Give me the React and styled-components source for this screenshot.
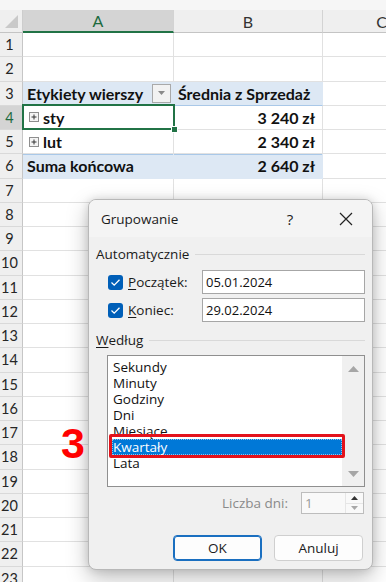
import React from 'react';
import styled, { createGlobalStyle } from 'styled-components';

const Global = createGlobalStyle`
  html, body { margin: 0; padding: 0; background: #fff; }
  body { width: 386px; height: 582px; overflow: hidden; }
  * { box-sizing: border-box; }
`;

const COLS = '23px 151px 149px 118px';

const Screen = styled.div`
  position: relative;
  width: 386px;
  height: 582px;
  overflow: hidden;
  background: #fff;
  font-family: Lato, "Liberation Sans", sans-serif;
`;

const TopStrip = styled.div`
  height: 10px;
  background: #f6f6f6;
`;

const HeaderRow = styled.div`
  display: grid;
  grid-template-columns: ${COLS};
  height: 23px;
  background: #efefef;
`;

const Corner = styled.div`
  display: flex;
  align-items: flex-end;
  justify-content: flex-end;
  padding: 0 4px 4px 0;
  border-right: 1px solid #cdcdcd;
  border-bottom: 1px solid #c4c4c4;
`;

const ColHead = styled.div`
  display: flex;
  align-items: center;
  justify-content: center;
  font-size: 16px;
  color: ${p => (p.$sel ? '#1d6b3e' : '#333')};
  background: ${p => (p.$sel ? '#d4d4d4' : '#efefef')};
  border-right: 1px solid #d3d3d3;
  border-bottom: ${p => (p.$sel ? '2px solid #217346' : '1px solid #c4c4c4')};
  overflow: hidden;
  white-space: nowrap;
`;

const SheetRow = styled.div`
  display: grid;
  grid-template-columns: ${COLS};
  height: 24.25px;
`;

const RowHead = styled.div`
  display: flex;
  align-items: center;
  justify-content: center;
  padding-right: 3px;
  font-size: 14.5px;
  color: ${p => (p.$sel ? '#1d6b3e' : '#262626')};
  background: ${p => (p.$sel ? '#d4d4d4' : '#efefef')};
  border-right: 1px solid #c6c6c6;
  border-bottom: 1px solid #d9d9d9;
`;

const FILL = '#dde8f4';

const Cell = styled.div`
  position: relative;
  display: flex;
  align-items: center;
  justify-content: ${p => (p.$right ? 'flex-end' : 'flex-start')};
  padding: 0 ${p => (p.$right ? '7px' : '2px')} 0 ${p => (p.$indent ? '6px' : '4px')};
  background: ${p => (p.$fill ? FILL : '#fff')};
  border-right: 1px solid ${p => (p.$fill ? FILL : '#e1e1e1')};
  border-bottom: 1px solid ${p => (p.$line === 'bottom' ? '#a9c8e8' : p.$fill ? FILL : '#e1e1e1')};
  box-shadow: ${p => (p.$line === 'top' ? 'inset 0 1px 0 #a9c8e8' : 'none')};
  font-size: 16px;
  font-weight: ${p => (p.$bold ? 700 : 400)};
  color: #111;
  white-space: nowrap;
`;

const Selection = styled.div`
  position: absolute;
  top: -2px;
  left: -1px;
  right: -2px;
  bottom: -1px;
  border: 2px solid #217346;
  pointer-events: none;
  z-index: 2;
`;

const FillHandle = styled.div`
  position: absolute;
  right: -5px;
  bottom: -5px;
  width: 7px;
  height: 7px;
  background: #217346;
  border: 1px solid #fff;
`;

const FilterBtn = styled.div`
  margin-left: auto;
  width: 19px;
  height: 19px;
  display: flex;
  align-items: center;
  justify-content: center;
  background: #f2f2f2;
  border: 1px solid #a9a9a9;
`;

const PlusBox = styled.svg`
  flex: none;
  margin-right: 4px;
`;

/* ---------------- dialog ---------------- */

const Dialog = styled.div`
  position: absolute;
  left: 88px;
  top: 199px;
  width: 285px;
  height: 371px;
  display: flex;
  flex-direction: column;
  background: #f0f0f0;
  border: 1px solid #b8b8b8;
  border-radius: 8px;
  box-shadow: 0 8px 22px rgba(0, 0, 0, 0.26), 0 0 8px rgba(0, 0, 0, 0.12);
  font-family: "Open Sans", "Noto Sans", sans-serif;
  font-size: 13.5px;
  color: #1b1b1b;
  overflow: hidden;
`;

const TitleBar = styled.div`
  height: 37px;
  display: flex;
  align-items: center;
  padding-left: 12px;
  background: #f4f4f4;
`;

const TitleText = styled.div`
  flex: 1;
  font-size: 13.5px;
`;

const TitleBtn = styled.div`
  width: ${p => p.$w}px;
  height: 37px;
  display: flex;
  align-items: center;
  justify-content: center;
  margin-right: ${p => p.$mr || 0}px;
  font-size: 15px;
  color: #222;
`;

const Body = styled.div`
  display: flex;
  flex-direction: column;
  padding: 7px 7px 0 7px;
`;

const GroupHeader = styled.div`
  display: flex;
  align-items: center;
  gap: 6px;
  height: 20px;
  margin-top: ${p => p.$mt || 0}px;
`;

const GroupLine = styled.div`
  flex: 1;
  height: 1px;
  background: #d9d9d9;
`;

const Key = styled.span`
  text-decoration: underline;
  text-underline-offset: 2px;
`;

const FieldRow = styled.div`
  display: grid;
  grid-template-columns: 15px 69px 1fr;
  column-gap: 5px;
  align-items: center;
  height: 24px;
  margin-top: ${p => p.$mt}px;
  padding-left: 12px;
`;

const Check = styled.div`
  width: 15px;
  height: 15px;
  border-radius: 3px;
  background: #005fb8;
  display: flex;
  align-items: center;
  justify-content: center;
`;

const TextInput = styled.div`
  height: 24px;
  display: flex;
  align-items: center;
  padding-left: 3px;
  background: #fff;
  border: 1px solid #a6a6a6;
  font-size: 13px;
  color: #111;
`;

const ListBox = styled.div`
  position: relative;
  display: flex;
  height: 132px;
  margin: 5px 0 0 11px;
  background: #fff;
  border: 1px solid #8f8f8f;
`;

const ListItems = styled.div`
  flex: 1;
  padding: 3px 0 0 4px;
  display: flex;
  flex-direction: column;
`;

const ListItem = styled.div`
  height: 16px;
  line-height: 16px;
  padding-left: 1px;
  font-size: 13.5px;
  color: ${p => (p.$sel ? '#fff' : '#111')};
  background: ${p => (p.$sel ? '#0078d7' : 'transparent')};
  outline: ${p => (p.$sel ? '1px dotted rgba(255,255,255,0.55)' : 'none')};
  outline-offset: -1px;
`;

const ScrollBar = styled.div`
  width: 22px;
  background: #f0f0f0;
  display: flex;
  flex-direction: column;
  justify-content: space-between;
  align-items: center;
  padding: 10px 0 9px;
`;

const Highlight = styled.div`
  position: absolute;
  left: 1px;
  top: 78px;
  width: 236px;
  height: 24px;
  border: 3px solid #e3121b;
  border-radius: 2px;
  pointer-events: none;
`;

const SpinRow = styled.div`
  display: flex;
  justify-content: flex-end;
  align-items: center;
  gap: 13px;
  margin-top: 5px;
  padding-right: 1px;
`;

const SpinLabel = styled.div`
  color: #8a8a8a;
  font-size: 13.5px;
`;

const SpinBox = styled.div`
  width: 63px;
  height: 22px;
  display: flex;
  background: #f9f9f9;
  border: 1px solid #bdbdbd;
`;

const SpinValue = styled.div`
  flex: 1;
  padding-left: 3px;
  display: flex;
  align-items: center;
  color: #9a9a9a;
  font-size: 13.5px;
`;

const SpinButtons = styled.div`
  width: 18px;
  display: flex;
  flex-direction: column;
  border-left: 1px solid #e6e6e6;
`;

const SpinHalf = styled.div`
  flex: 1;
  display: flex;
  align-items: center;
  justify-content: center;
  border-top: ${p => (p.$bottom ? '1px solid #e6e6e6' : 'none')};
`;

const ButtonRow = styled.div`
  display: flex;
  justify-content: flex-end;
  gap: 12px;
  margin-top: 21px;
  padding-right: 2px;
`;

const Button = styled.div`
  width: 89px;
  height: 26px;
  display: flex;
  align-items: center;
  justify-content: center;
  background: #fdfdfd;
  border: 1px solid ${p => (p.$primary ? '#1a6fc0' : '#cfcfcf')};
  box-shadow: ${p => (p.$primary ? 'inset 0 0 0 1px #1a6fc0' : 'none')};
  border-radius: 4px;
  font-size: 13.5px;
  color: #1b1b1b;
`;

const StepNumber = styled.div`
  position: absolute;
  left: 61px;
  top: 422px;
  font-family: "Liberation Sans", Arial, sans-serif;
  font-weight: 700;
  font-size: 43px;
  line-height: 1;
  color: #ff0000;
`;

const Tri = ({ dir = 'down', color, w = 9, h = 5 }) => (
  <svg width={w} height={h} viewBox={`0 0 ${w} ${h}`}>
    {dir === 'down' ? (
      <polygon points={`0,0 ${w},0 ${w / 2},${h}`} fill={color} />
    ) : (
      <polygon points={`0,${h} ${w},${h} ${w / 2},0`} fill={color} />
    )}
  </svg>
);

const Plus = () => (
  <PlusBox width="10" height="10" viewBox="0 0 10 10">
    <rect x="0.5" y="0.5" width="9" height="9" fill="#f4f4f4" stroke="#8e8e8e" />
    <path d="M2.5 5H7.5M5 2.5V7.5" stroke="#333" strokeWidth="1" />
  </PlusBox>
);

const rows = Array.from({ length: 23 }, (_, i) => i + 1);

function renderCells(n) {
  switch (n) {
    case 3:
      return (
        <>
          <Cell $fill $bold $line="bottom">
            Etykiety wierszy
            <FilterBtn>
              <Tri color="#8a8a8a" w={7} h={4} />
            </FilterBtn>
          </Cell>
          <Cell $fill $bold $line="bottom">Średnia z Sprzedaż</Cell>
        </>
      );
    case 4:
      return (
        <>
          <Cell $bold $indent>
            <Plus />sty
            <Selection>
              <FillHandle />
            </Selection>
          </Cell>
          <Cell $bold $right>3 240 zł</Cell>
        </>
      );
    case 5:
      return (
        <>
          <Cell $bold $indent>
            <Plus />lut
          </Cell>
          <Cell $bold $right>2 340 zł</Cell>
        </>
      );
    case 6:
      return (
        <>
          <Cell $fill $bold $line="top">Suma końcowa</Cell>
          <Cell $fill $bold $right $line="top">2 640 zł</Cell>
        </>
      );
    default:
      return (
        <>
          <Cell />
          <Cell />
        </>
      );
  }
}

const items = ['Sekundy', 'Minuty', 'Godziny', 'Dni', 'Miesiące', 'Kwartały', 'Lata'];

export default function App() {
  return (
    <Screen>
      <Global />
      <TopStrip />
      <HeaderRow>
        <Corner>
          <svg width="13" height="13" viewBox="0 0 13 13">
            <polygon points="13,0 13,13 0,13" fill="#c9c9c9" />
          </svg>
        </Corner>
        <ColHead $sel>A</ColHead>
        <ColHead>B</ColHead>
        <ColHead>C</ColHead>
      </HeaderRow>
      {rows.map(n => (
        <SheetRow key={n}>
          <RowHead $sel={n === 4}>{n}</RowHead>
          {renderCells(n)}
          <Cell />
        </SheetRow>
      ))}

      <Dialog>
        <TitleBar>
          <TitleText>Grupowanie</TitleText>
          <TitleBtn $w={40} $mr={13}>?</TitleBtn>
          <TitleBtn $w={46} $mr={3}>
            <svg width="14" height="14" viewBox="0 0 14 14">
              <path d="M1 1L13 13M13 1L1 13" stroke="#222" strokeWidth="1.2" />
            </svg>
          </TitleBtn>
        </TitleBar>
        <Body>
          <GroupHeader>
            Automatycznie
            <GroupLine />
          </GroupHeader>
          <FieldRow $mt={6}>
            <Check>
              <svg width="11" height="9" viewBox="0 0 11 9">
                <path d="M1.5 4.5L4.2 7.2L9.5 1.8" fill="none" stroke="#fff" strokeWidth="1.3" />
              </svg>
            </Check>
            <span>
              <Key>P</Key>oczątek:
            </span>
            <TextInput>05.01.2024</TextInput>
          </FieldRow>
          <FieldRow $mt={4}>
            <Check>
              <svg width="11" height="9" viewBox="0 0 11 9">
                <path d="M1.5 4.5L4.2 7.2L9.5 1.8" fill="none" stroke="#fff" strokeWidth="1.3" />
              </svg>
            </Check>
            <span>
              <Key>K</Key>oniec:
            </span>
            <TextInput>29.02.2024</TextInput>
          </FieldRow>
          <GroupHeader $mt={8}>
            <span>
              <Key>W</Key>edług
            </span>
            <GroupLine />
          </GroupHeader>
          <ListBox>
            <ListItems>
              {items.map(it => (
                <ListItem key={it} $sel={it === 'Kwartały'}>
                  {it}
                </ListItem>
              ))}
            </ListItems>
            <ScrollBar>
              <Tri dir="up" color="#a6a6a6" w={11} h={6} />
              <Tri dir="down" color="#a6a6a6" w={11} h={6} />
            </ScrollBar>
            <Highlight />
          </ListBox>
          <SpinRow>
            <SpinLabel>Liczba dni:</SpinLabel>
            <SpinBox>
              <SpinValue>1</SpinValue>
              <SpinButtons>
                <SpinHalf>
                  <Tri dir="up" color="#333" w={7} h={4} />
                </SpinHalf>
                <SpinHalf $bottom>
                  <Tri dir="down" color="#a8a8a8" w={7} h={4} />
                </SpinHalf>
              </SpinButtons>
            </SpinBox>
          </SpinRow>
          <ButtonRow>
            <Button $primary>OK</Button>
            <Button>Anuluj</Button>
          </ButtonRow>
        </Body>
      </Dialog>

      <StepNumber>3</StepNumber>
    </Screen>
  );
}
